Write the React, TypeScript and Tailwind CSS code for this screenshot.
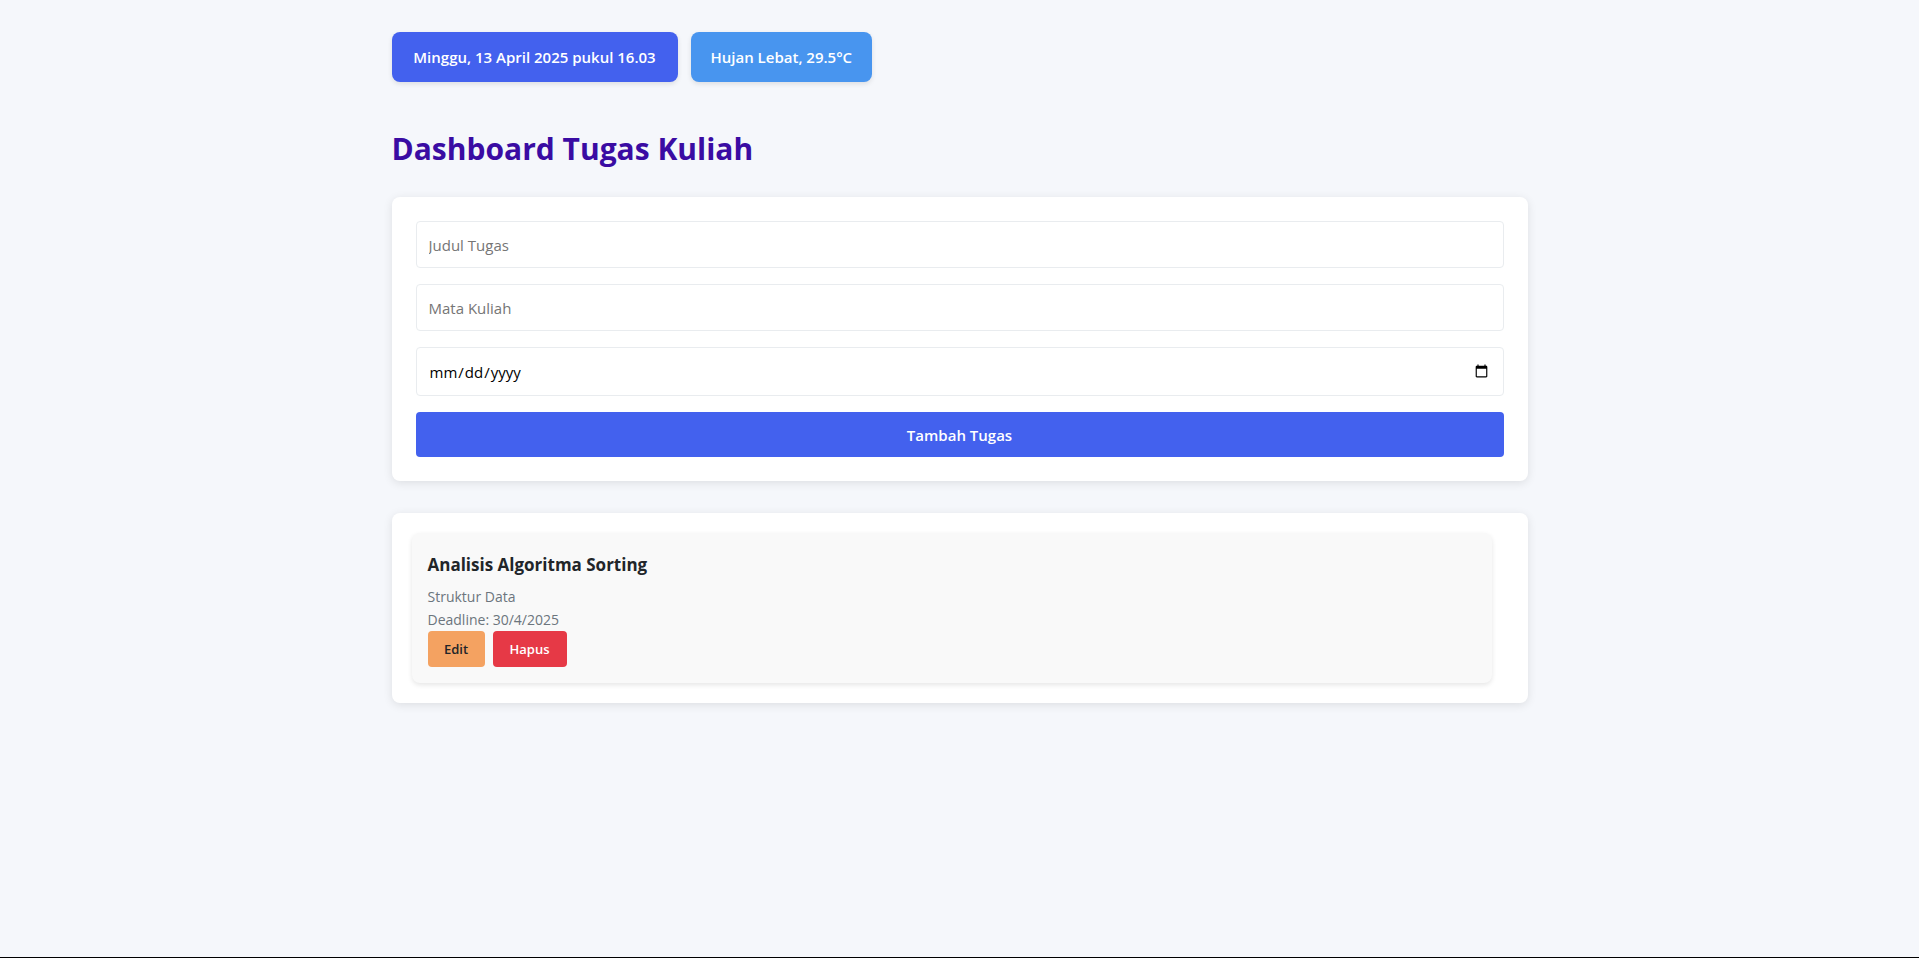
import { useState } from "react";
import type { FormEvent } from "react";

interface Task {
  id: number;
  title: string;
  course: string;
  deadline: string;
}

const initialTasks: Task[] = [
  { id: 1, title: "Analisis Algoritma Sorting", course: "Struktur Data", deadline: "2025-04-30" },
];

function formatDeadline(value: string) {
  const [year, month, day] = value.split("-").map(Number);
  return `${day}/${month}/${year}`;
}

const fieldClass =
  "w-full rounded border border-[#e9ecef] bg-white px-3 text-[15px] leading-6 outline-none placeholder:text-[#757575] focus:border-[#4361ee]";

function TaskForm({ onAdd }: { onAdd: (task: Omit<Task, "id">) => void }) {
  const [title, setTitle] = useState("");
  const [course, setCourse] = useState("");
  const [deadline, setDeadline] = useState("");

  function submit(event: FormEvent) {
    event.preventDefault();
    if (!title || !course || !deadline) return;
    onAdd({ title, course, deadline });
    setTitle("");
    setCourse("");
    setDeadline("");
  }

  return (
    <form
      onSubmit={submit}
      className="mb-8 flex flex-col gap-4 rounded-lg bg-white p-6 shadow-[0_2px_10px_rgba(0,0,0,0.1)]"
    >
      <input
        type="text"
        aria-label="Judul Tugas"
        placeholder="Judul Tugas"
        value={title}
        onChange={(e) => setTitle(e.target.value)}
        className={`${fieldClass} h-[47px]`}
      />
      <input
        type="text"
        aria-label="Mata Kuliah"
        placeholder="Mata Kuliah"
        value={course}
        onChange={(e) => setCourse(e.target.value)}
        className={`${fieldClass} h-[47px]`}
      />
      <input
        type="date"
        aria-label="Deadline"
        value={deadline}
        onChange={(e) => setDeadline(e.target.value)}
        className={`${fieldClass} h-[49px] text-black`}
      />
      <button
        type="submit"
        className="h-[45px] cursor-pointer rounded bg-[#4361ee] text-[15px] leading-6 font-semibold text-white"
      >
        Tambah Tugas
      </button>
    </form>
  );
}

export default function App() {
  const [tasks, setTasks] = useState<Task[]>(initialTasks);

  return (
    <div className="min-h-screen border-b border-black bg-[#f5f7fb] font-['Open_Sans','Noto_Sans',sans-serif] text-[#212529]">
      <main className="mx-auto max-w-[1200px] p-8">
        <div className="mb-12 flex flex-wrap gap-[13px]">
          <div className="min-w-[286px] rounded-lg bg-[#4361ee] px-5 py-[13px] text-center text-[15px] leading-6 font-semibold text-white shadow-[0_2px_5px_rgba(0,0,0,0.1)]">
            Minggu, 13 April 2025 pukul 16.03
          </div>
          <div className="rounded-lg bg-[#4895ef] px-5 py-[13px] text-center text-[15px] leading-6 font-semibold text-white shadow-[0_2px_5px_rgba(0,0,0,0.1)]">
            Hujan Lebat, 29.5°C
          </div>
        </div>

        <h1 className="mb-[29px] text-[30px] leading-[38px] font-bold text-[#3a0ca3]">Dashboard Tugas Kuliah</h1>

        <TaskForm onAdd={(task) => setTasks([...tasks, { ...task, id: Date.now() }])} />

        <ul className="flex flex-col gap-4 rounded-lg bg-white py-5 pr-9 pl-5 shadow-[0_2px_10px_rgba(0,0,0,0.1)]">
          {tasks.map((task) => (
            <li key={task.id} className="rounded-lg bg-[#f9f9f9] p-4 shadow-[0_2px_5px_rgba(0,0,0,0.1)]">
              <h3 className="mb-1 text-[17px] leading-8 font-bold">{task.title}</h3>
              <p className="text-[14px] leading-[23px] text-[#6c757d]">{task.course}</p>
              <p className="text-[14px] leading-[23px] text-[#6c757d]">Deadline: {formatDeadline(task.deadline)}</p>
              <div className="flex gap-2">
                <button
                  type="button"
                  className="h-9 min-w-[57px] cursor-pointer rounded bg-[#f4a261] px-4 text-[13px] leading-5 font-semibold text-[#212529]"
                >
                  Edit
                </button>
                <button
                  type="button"
                  onClick={() => setTasks(tasks.filter((t) => t.id !== task.id))}
                  className="h-9 min-w-[74px] cursor-pointer rounded bg-[#e63946] px-4 text-[13px] leading-5 font-semibold text-white"
                >
                  Hapus
                </button>
              </div>
            </li>
          ))}
        </ul>
      </main>
    </div>
  );
}
